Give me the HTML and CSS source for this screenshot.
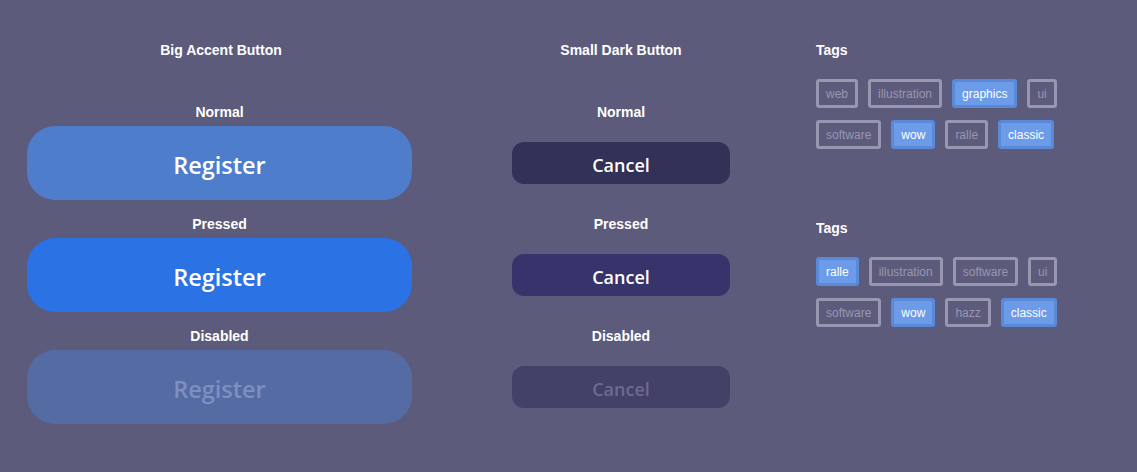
FILE: index.html
```html
<!DOCTYPE html>
<html>
<head>
<meta charset="utf-8">
<link rel="stylesheet" href="styles.css">
</head>
<body>
<div class="page">
  <section class="col col-big">
    <h2 class="title">Big Accent Button</h2>
    <div class="states">
      <div class="state">
        <div class="label">Normal</div>
        <div class="slot"><button class="big">Register</button></div>
      </div>
      <div class="state">
        <div class="label">Pressed</div>
        <div class="slot"><button class="big pressed">Register</button></div>
      </div>
      <div class="state">
        <div class="label">Disabled</div>
        <div class="slot"><button class="big disabled">Register</button></div>
      </div>
    </div>
  </section>
  <section class="col col-small">
    <h2 class="title">Small Dark Button</h2>
    <div class="states">
      <div class="state">
        <div class="label">Normal</div>
        <div class="slot"><button class="small">Cancel</button></div>
      </div>
      <div class="state">
        <div class="label">Pressed</div>
        <div class="slot"><button class="small pressed">Cancel</button></div>
      </div>
      <div class="state">
        <div class="label">Disabled</div>
        <div class="slot"><button class="small disabled">Cancel</button></div>
      </div>
    </div>
  </section>
  <section class="col col-tags">
    <div class="tag-group">
      <h2 class="title left">Tags</h2>
      <div class="tags">
        <span class="tag">web</span>
        <span class="tag">illustration</span>
        <span class="tag on">graphics</span>
        <span class="tag">ui</span>
        <span class="tag">software</span>
        <span class="tag on">wow</span>
        <span class="tag">ralle</span>
        <span class="tag on">classic</span>
      </div>
    </div>
    <div class="tag-group second">
      <h2 class="title left">Tags</h2>
      <div class="tags">
        <span class="tag on">ralle</span>
        <span class="tag">illustration</span>
        <span class="tag">software</span>
        <span class="tag">ui</span>
        <span class="tag">software</span>
        <span class="tag on">wow</span>
        <span class="tag">hazz</span>
        <span class="tag on">classic</span>
      </div>
    </div>
  </section>
</div>
</body>
</html>
```

FILE: styles.css
```css
html, body {
  margin: 0;
  padding: 0;
  background: #5c5b7c;
  width: 1137px;
  height: 472px;
  overflow: hidden;
}
.page {
  display: flex;
  align-items: flex-start;
  padding: 42px 0 0 27px;
  font-family: "Liberation Sans", Arial, sans-serif;
}
.col {
  display: flex;
  flex-direction: column;
}
.col-big { width: 385px; }
.col-small { width: 218px; margin-left: 100px; }
.col-tags { width: 260px; margin-left: 86px; }
.title {
  margin: 0;
  font-size: 14px;
  line-height: 17px;
  font-weight: bold;
  color: #ffffff;
  text-align: center;
}
.col-big .title { padding-left: 3px; }
.title.left { text-align: left; }
.states {
  display: flex;
  flex-direction: column;
  margin-top: 45px;
  gap: 16px;
}
.state {
  display: flex;
  flex-direction: column;
  gap: 6px;
}
.label {
  font-size: 14px;
  line-height: 16px;
  font-weight: bold;
  color: #ffffff;
  text-align: center;
}
.slot {
  height: 74px;
  display: flex;
  align-items: center;
}
button {
  border: none;
  padding: 0;
  width: 100%;
  font-family: "Open Sans", "Noto Sans", sans-serif;
  color: #ffffff;
  cursor: pointer;
}
.big {
  height: 74px;
  border-radius: 28px;
  background: #4e7dcb;
  font-size: 23.5px;
  font-weight: 600;
  padding-top: 3px;
}
.big.pressed { background: #2b72e4; }
.big.disabled { background: #556ba4; color: #7d90c0; }
.small {
  height: 42px;
  border-radius: 12px;
  background: #323157;
  font-size: 18px;
  font-weight: 600;
  padding-top: 3px;
}
.small.pressed { background: #37346b; }
.small.disabled { background: #434167; color: #6c6b8e; }
.tag-group .tags {
  margin-top: 20px;
  display: flex;
  flex-wrap: wrap;
  column-gap: 10px;
  row-gap: 12px;
  width: 250px;
}
.tag-group.second { margin-top: 71px; }
.tag {
  box-sizing: border-box;
  height: 29px;
  display: flex;
  align-items: center;
  padding: 0 7px;
  border: 3px solid #9897b1;
  border-radius: 3px;
  font-size: 12px;
  color: #9897b1;
}
.tag.on {
  background: #6b9be9;
  border-color: #5a89d8;
  color: #ffffff;
}
```
